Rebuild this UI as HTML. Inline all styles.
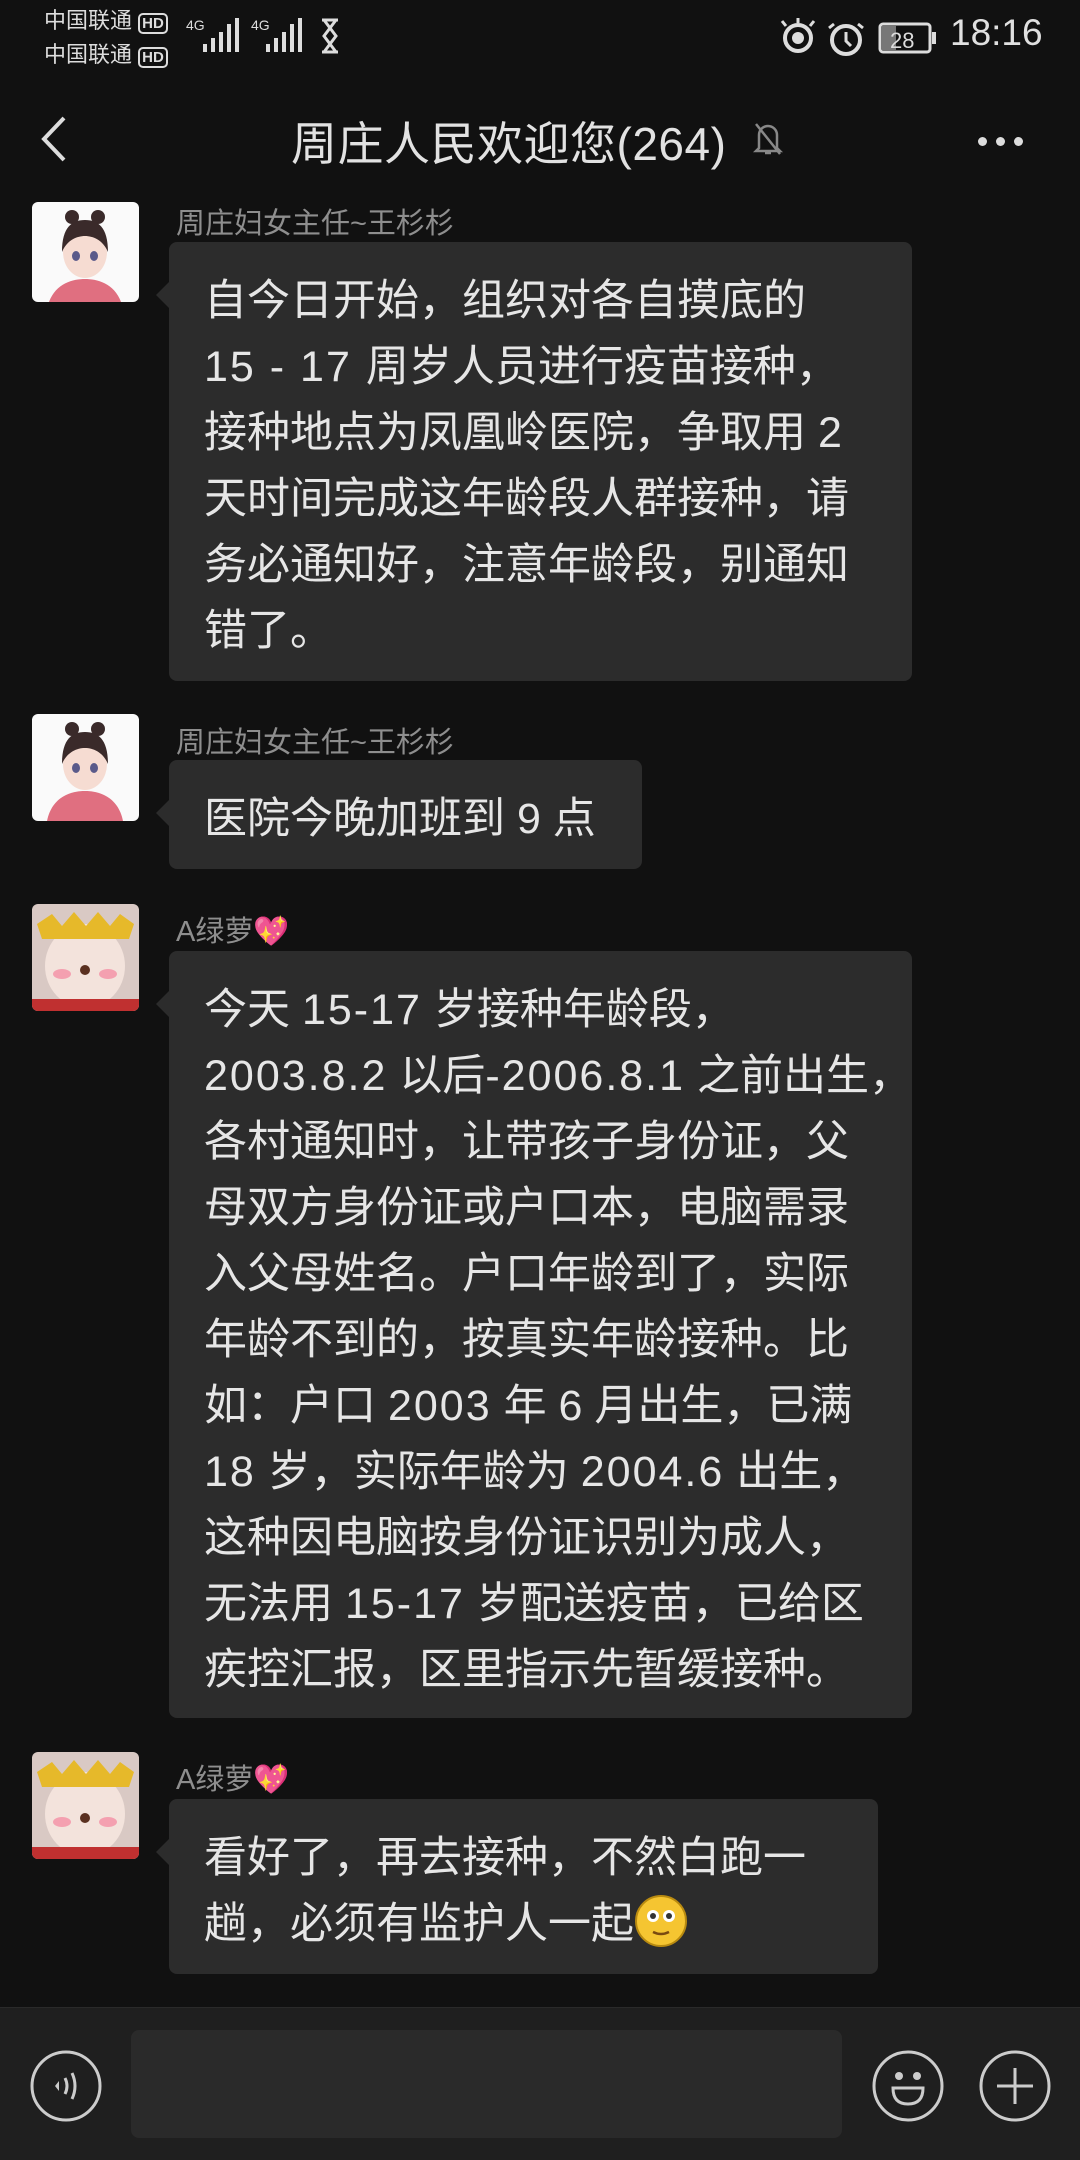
<!DOCTYPE html>
<html><head><meta charset="utf-8">
<style>
*{margin:0;padding:0;box-sizing:border-box}
body{width:1080px;height:2160px;background:#111;position:relative;overflow:hidden;font-family:"Liberation Sans","Noto Sans CJK SC",sans-serif;color:#e4e4e4}
.a{position:absolute}
.name{position:absolute;left:176px;font-size:29px;color:#8e8e8e;white-space:nowrap}
.bub{position:absolute;left:169px;background:#2c2c2c;border-radius:8px;font-size:43px;line-height:66px;padding:26px 20px 20px 35px;white-space:nowrap;color:#e6e6e6}
.bub:before{content:"";position:absolute;left:-13px;top:40px;border-top:13px solid transparent;border-bottom:13px solid transparent;border-right:13px solid #2c2c2c}
.n{letter-spacing:2px}
.av{position:absolute;left:32px;width:107px;height:107px;border-radius:6px;overflow:hidden}
</style></head><body>
<!-- status bar -->
<div class="a" style="left:44px;top:5px;font-size:22px;line-height:31px;color:#ddd">中国联通 <span style="border:2px solid #ddd;border-radius:5px;font-size:15px;padding:0 2px;font-weight:bold">HD</span><br>中国联通 <span style="border:2px solid #ddd;border-radius:5px;font-size:15px;padding:0 2px;font-weight:bold">HD</span></div>
<svg class="a" style="left:183px;top:14px" width="165" height="42" viewBox="0 0 165 42" fill="#ddd">
<text x="3" y="16" font-size="14" font-family="Liberation Sans" fill="#ddd">4G</text>
<rect x="20" y="30" width="4" height="8"/><rect x="28" y="24" width="4" height="14"/><rect x="36" y="18" width="4" height="20"/><rect x="44" y="10" width="4" height="28"/><rect x="52" y="4" width="4" height="34"/>
<text x="68" y="16" font-size="14" font-family="Liberation Sans" fill="#ddd">4G</text>
<rect x="83" y="30" width="4" height="8"/><rect x="91" y="24" width="4" height="14"/><rect x="99" y="18" width="4" height="20"/><rect x="107" y="10" width="4" height="28"/><rect x="115" y="4" width="4" height="34"/>
<path d="M139 6h16M139 38h16M141 6l12 16-12 16M153 6l-12 16 12 16" stroke="#ddd" stroke-width="3" fill="none"/>
</svg>
<svg class="a" style="left:778px;top:18px" width="160" height="40" viewBox="0 0 160 40">
<circle cx="20" cy="20" r="13" fill="none" stroke="#ddd" stroke-width="4"/><circle cx="20" cy="20" r="6" fill="#ddd"/><path d="M8 8l-4-5M32 8l4-5M20 5V0" stroke="#ddd" stroke-width="3"/>
<circle cx="68" cy="22" r="14" fill="none" stroke="#ddd" stroke-width="4"/><path d="M68 14v9l5 5M56 6l-5 4M80 6l5 4" stroke="#ddd" stroke-width="3" fill="none"/>
<rect x="102" y="6" width="50" height="28" rx="3" fill="none" stroke="#ddd" stroke-width="3"/><rect x="104" y="8" width="14" height="24" fill="#777"/><rect x="154" y="14" width="4" height="12" fill="#ddd"/>
<text x="112" y="30" font-size="22" fill="#ddd" font-family="Liberation Sans">28</text>
</svg>
<div class="a" style="left:950px;top:12px;font-size:37px;color:#e0e0e0">18:16</div>
<!-- header -->
<svg class="a" style="left:36px;top:114px" width="34" height="50"><path d="M28 4L8 25l20 21" stroke="#ddd" stroke-width="4" fill="none"/></svg>
<div class="a" style="left:291px;top:108px;font-size:46px;color:#e2e2e2;white-space:nowrap;letter-spacing:0.5px">周庄人民欢迎您(264)</div>
<svg class="a" style="left:750px;top:118px" width="36" height="40" viewBox="0 0 36 40"><path d="M9 30V17a9 9 0 0118 0v13l3 3H6zM15 35h6M6 6l24 30" stroke="#888" stroke-width="2.5" fill="none"/></svg>
<div class="a" style="left:978px;top:133px"><span style="display:inline-block;width:9px;height:9px;border-radius:50%;background:#ddd;margin-right:9px"></span><span style="display:inline-block;width:9px;height:9px;border-radius:50%;background:#ddd;margin-right:9px"></span><span style="display:inline-block;width:9px;height:9px;border-radius:50%;background:#ddd"></span></div>

<!-- msg1 -->
<div class="av" style="top:202px;height:100px">
<svg width="107" height="107" viewBox="0 0 107 107"><rect width="107" height="107" fill="#fafafa"/><path d="M15 107c5-25 25-30 38-30s33 5 38 30z" fill="#e06f80"/><ellipse cx="53" cy="50" rx="22" ry="26" fill="#f6dcd2"/><path d="M30 50c0-25 10-32 23-32s23 7 23 32c-5-12-15-16-23-16s-18 4-23 16z" fill="#3a2a2a"/><circle cx="40" cy="15" r="7" fill="#3a2a2a"/><circle cx="66" cy="15" r="7" fill="#3a2a2a"/><ellipse cx="44" cy="54" rx="4" ry="5" fill="#5a5a8a"/><ellipse cx="62" cy="54" rx="4" ry="5" fill="#5a5a8a"/></svg></div>
<div class="name" style="top:200px">周庄妇女主任~王杉杉</div>
<div class="bub" style="top:242px;width:743px;height:439px">自今日开始，组织对各自摸底的<br><span class="n">15 - 17 </span>周岁人员进行疫苗接种，<br>接种地点为凤凰岭医院，争取用 2<br>天时间完成这年龄段人群接种，请<br>务必通知好，注意年龄段，别通知<br>错了。</div>

<!-- msg2 -->
<div class="av" style="top:714px">
<svg width="107" height="107" viewBox="0 0 107 107"><rect width="107" height="107" fill="#fafafa"/><path d="M15 107c5-25 25-30 38-30s33 5 38 30z" fill="#e06f80"/><ellipse cx="53" cy="50" rx="22" ry="26" fill="#f6dcd2"/><path d="M30 50c0-25 10-32 23-32s23 7 23 32c-5-12-15-16-23-16s-18 4-23 16z" fill="#3a2a2a"/><circle cx="40" cy="15" r="7" fill="#3a2a2a"/><circle cx="66" cy="15" r="7" fill="#3a2a2a"/><ellipse cx="44" cy="54" rx="4" ry="5" fill="#5a5a8a"/><ellipse cx="62" cy="54" rx="4" ry="5" fill="#5a5a8a"/></svg></div>
<div class="name" style="top:719px">周庄妇女主任~王杉杉</div>
<div class="bub" style="top:760px;width:473px;height:109px">医院今晚加班到 9 点</div>

<!-- msg3 -->
<div class="av" style="top:904px">
<svg width="107" height="107" viewBox="0 0 107 107"><rect width="107" height="107" fill="#d9c9c4"/><ellipse cx="53" cy="62" rx="40" ry="42" fill="#f3e3dc"/><path d="M5 20l15-10 10 12 12-14 12 14 12-14 12 14 10-12 14 10-5 15H10z" fill="#e6b92a"/><ellipse cx="30" cy="70" rx="9" ry="5" fill="#f4a0b0"/><ellipse cx="76" cy="70" rx="9" ry="5" fill="#f4a0b0"/><circle cx="53" cy="66" r="5" fill="#5a3020"/><rect x="0" y="95" width="107" height="12" fill="#c03030"/></svg></div>
<div class="name" style="top:908px">A绿萝<span style="color:#e85fa8">💖</span></div>
<div class="bub" style="top:951px;width:743px;height:767px">今天 <span class="n">15-17</span> 岁接种年龄段，<br><span class="n">2003.8.2</span> 以后<span class="n">-2006.8.1</span> 之前出生，<br>各村通知时，让带孩子身份证，父<br>母双方身份证或户口本，电脑需录<br>入父母姓名。户口年龄到了，实际<br>年龄不到的，按真实年龄接种。比<br>如：户口 <span class="n">2003</span> 年 6 月出生，已满<br><span class="n">18</span> 岁，实际年龄为 <span class="n">2004.6</span> 出生，<br>这种因电脑按身份证识别为成人，<br>无法用 <span class="n">15-17</span> 岁配送疫苗，已给区<br>疾控汇报，区里指示先暂缓接种。</div>

<!-- msg4 -->
<div class="av" style="top:1752px">
<svg width="107" height="107" viewBox="0 0 107 107"><rect width="107" height="107" fill="#d9c9c4"/><ellipse cx="53" cy="62" rx="40" ry="42" fill="#f3e3dc"/><path d="M5 20l15-10 10 12 12-14 12 14 12-14 12 14 10-12 14 10-5 15H10z" fill="#e6b92a"/><ellipse cx="30" cy="70" rx="9" ry="5" fill="#f4a0b0"/><ellipse cx="76" cy="70" rx="9" ry="5" fill="#f4a0b0"/><circle cx="53" cy="66" r="5" fill="#5a3020"/><rect x="0" y="95" width="107" height="12" fill="#c03030"/></svg></div>
<div class="name" style="top:1756px">A绿萝<span style="color:#e85fa8">💖</span></div>
<div class="bub" style="top:1799px;width:709px;height:175px">看好了，再去接种，不然白跑一<br>趟，必须有监护人一起<svg width="54" height="54" viewBox="0 0 54 54" style="vertical-align:-10px"><circle cx="27" cy="27" r="25" fill="#f5c531" stroke="#b88a10" stroke-width="2"/><circle cx="19" cy="22" r="6" fill="#fff"/><circle cx="35" cy="22" r="6" fill="#fff"/><circle cx="19" cy="22" r="3" fill="#333"/><circle cx="35" cy="22" r="3" fill="#333"/><path d="M19 38q8 4 16 0" stroke="#7a4a10" stroke-width="2.5" fill="none"/></svg></div>

<!-- bottom bar -->
<div class="a" style="left:0;top:2007px;width:1080px;height:153px;background:#1f1f1f;border-top:1px solid #2a2a2a"></div>
<div class="a" style="left:131px;top:2030px;width:711px;height:108px;background:#2a2a2a;border-radius:8px"></div>
<svg class="a" style="left:28px;top:2048px" width="76" height="76" viewBox="0 0 76 76"><circle cx="38" cy="38" r="34" fill="none" stroke="#ccc" stroke-width="3"/><path d="M27 38l4-5v10z" fill="#ccc"/><path d="M37 30q4 8 0 16M44 25q6 13 0 26" stroke="#ccc" stroke-width="3" fill="none"/></svg>
<svg class="a" style="left:870px;top:2048px" width="76" height="76" viewBox="0 0 76 76"><circle cx="38" cy="38" r="34" fill="none" stroke="#ccc" stroke-width="3"/><circle cx="29" cy="28" r="4" fill="#ccc"/><circle cx="47" cy="28" r="4" fill="#ccc"/><path d="M23 40h30q0 16-15 16t-15-16z" fill="none" stroke="#ccc" stroke-width="3"/></svg>
<svg class="a" style="left:977px;top:2048px" width="76" height="76" viewBox="0 0 76 76"><circle cx="38" cy="38" r="34" fill="none" stroke="#ccc" stroke-width="3"/><path d="M38 20v36M20 38h36" stroke="#ccc" stroke-width="3"/></svg>
</body></html>
